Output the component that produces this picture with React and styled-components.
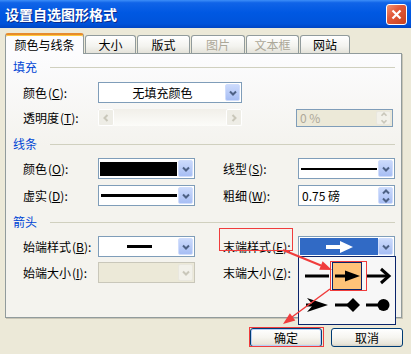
import React from "react";
import styled, { createGlobalStyle, css } from "styled-components";

const GlobalStyle = createGlobalStyle`
  html, body { margin: 0; padding: 0; }
  body {
    background: #ece9d8;
    font-family: "Noto Sans CJK SC", "Liberation Sans", sans-serif;
    font-size: 12px;
    color: #000;
  }
  u { text-decoration-thickness: 1px; text-underline-offset: 1px; }
`;

const Window = styled.div`
  position: relative;
  width: 411px;
  height: 354px;
  overflow: hidden;
  background: #ece9d8;
  display: flex;
  flex-direction: column;
`;

const TitleBar = styled.div`
  flex: none;
  height: 28px;
  display: flex;
  align-items: center;
  justify-content: space-between;
  padding: 0 4px 0 5px;
  background: linear-gradient(to bottom, #3d8ef8 0%, #1064e8 10%, #0058e2 45%, #0053da 85%, #0045c3 100%);
`;

const Title = styled.span`
  color: #fff;
  font-size: 14px;
  font-weight: bold;
  text-shadow: 1px 1px 0 #0c2b8c;
`;

const CloseButton = styled.div`
  width: 21px;
  height: 21px;
  box-sizing: border-box;
  border: 1px solid #fff;
  border-radius: 3px;
  background: linear-gradient(135deg, #f29474 0%, #e2593a 40%, #c8421e 100%);
  display: flex;
  align-items: center;
  justify-content: center;
`;

const Body = styled.div`
  flex: 1;
  display: flex;
  flex-direction: column;
  padding: 5px 9px 0 5px;
`;

const TabStrip = styled.div`
  display: flex;
  align-items: flex-end;
  height: 21px;
  position: relative;
  z-index: 1;
  margin-bottom: -1px;
`;

const Tab = styled.div`
  box-sizing: border-box;
  width: ${(p) => p.$w}px;
  height: 18px;
  margin-left: 1px;
  margin-bottom: 1px;
  border: 1px solid #919b9c;
  border-bottom: none;
  border-radius: 3px 3px 0 0;
  display: flex;
  align-items: center;
  justify-content: center;
  font-size: 12px;
  color: ${(p) => (p.$disabled ? "#aca899" : "#000")};
  background: linear-gradient(to bottom, #fff 0%, #f3f3ef 60%, #e4e2da 100%);
  ${(p) =>
    p.$active &&
    css`
      height: 21px;
      margin: 0;
      background: #fcfcfe;
      border-top: 2px solid #e68b2c;
      box-shadow: inset 0 1px 0 #ffc83c;
    `}
`;

const Panel = styled.div`
  box-sizing: border-box;
  height: 265px;
  border: 1px solid #919b9c;
  box-shadow: 1px 1px 0 #c8c5b6;
  background: linear-gradient(to bottom, #fcfcfe 0%, #f4f3ee 35%, #f4f3ee 100%);
  padding: 6px 6px 0 7px;
`;

const SectionHeader = styled.div`
  display: flex;
  align-items: center;
  gap: 13px;
  height: 14px;
  line-height: 14px;
  margin-top: ${(p) => (p.$first ? 0 : 9)}px;
  color: #0046d5;
  font-size: 12px;
  &::after {
    content: "";
    flex: 1;
    height: 1px;
    background: #d0d0bf;
  }
`;

const FieldGrid = styled.div`
  display: grid;
  grid-template-columns: ${(p) => p.$cols};
  grid-auto-rows: 21px;
  row-gap: ${(p) => p.$gap}px;
  align-items: center;
  margin: ${(p) => p.$top}px 0 0 10px;
`;

const LabelText = styled.span`
  font-size: 12px;
  white-space: nowrap;
  line-height: 21px;
`;

const Mnemonic = styled.span`
  margin-left: 1px;
`;

const SelectBox = styled.div`
  position: relative;
  box-sizing: border-box;
  height: 21px;
  display: flex;
  padding: 1px;
  border: 1px solid ${(p) => (p.$disabled ? "#c9c7ba" : "#7f9db9")};
  background: ${(p) => (p.$disabled ? "#ece9d8" : "#fff")};
`;

const SelectValue = styled.div`
  flex: 1;
  display: flex;
  align-items: center;
  justify-content: center;
  background: ${(p) => (p.$selected ? "#316ac5" : "transparent")};
  font-size: 12px;
`;

const DropButton = styled.div`
  width: 15px;
  flex: none;
  box-sizing: border-box;
  border: 1px solid ${(p) => (p.$disabled ? "#e9e7de" : "#d0ddfc")};
  border-radius: 2px;
  background: ${(p) =>
    p.$disabled ? "#f2f1ea" : "linear-gradient(to bottom, #cbdafc 0%, #b6c9f7 60%, #a7bef4 100%)"};
  display: flex;
  flex-direction: column;
  align-items: center;
  justify-content: center;
  gap: 2px;
`;

const Swatch = styled.div`
  flex: 1;
  align-self: stretch;
  margin: 2px 1px 1px 0;
  background: #000;
`;

const Stroke = styled.div`
  width: ${(p) => p.$w};
  height: ${(p) => p.$t}px;
  margin: 0 1px;
  background: #000;
`;

const ScrollBar = styled.div`
  box-sizing: border-box;
  height: 17px;
  display: flex;
  justify-content: space-between;
  background: linear-gradient(to bottom, #f1efe9, #fcfcf9);
`;

const ScrollButton = styled.div`
  width: 16px;
  box-sizing: border-box;
  border: 1px solid #fff;
  border-radius: 2px;
  background: #eeede6;
  display: flex;
  align-items: center;
  justify-content: center;
`;

const SpinBox = styled.div`
  grid-column: ${(p) => p.$col || "auto"};
  box-sizing: border-box;
  height: ${(p) => p.$h}px;
  display: flex;
  padding: 1px;
  border: 1px solid #7f9db9;
  background: ${(p) => (p.$disabled ? "#ece9d8" : "#fff")};
  color: ${(p) => (p.$disabled ? "#aca899" : "#000")};
`;

const SpinText = styled.div`
  flex: 1;
  display: flex;
  align-items: center;
  padding-left: 2px;
  font-size: 12px;
  white-space: pre;
`;

const ButtonRow = styled.div`
  display: flex;
  justify-content: flex-end;
  gap: 9px;
  margin: 10px -1px 0 0;
`;

const PushButton = styled.div`
  box-sizing: border-box;
  width: 72px;
  height: 19px;
  border: 1px solid #003c74;
  border-radius: 3px;
  background: linear-gradient(to bottom, #fff 0%, #f6f5f0 50%, #e8e5d9 88%, #d6d0c5 100%);
  display: flex;
  align-items: center;
  justify-content: center;
  font-size: 12px;
  ${(p) =>
    p.$default &&
    css`
      box-shadow: inset 0 0 0 1px #b7cdf7;
    `}
`;

const Popup = styled.div`
  position: absolute;
  top: 19px;
  left: -1px;
  width: 98px;
  height: 69px;
  box-sizing: border-box;
  border: 1px solid #0a246a;
  background: #f7f7f7;
  display: grid;
  grid-template-columns: repeat(3, 30px);
  grid-template-rows: 28px 28px;
  column-gap: 2px;
  row-gap: 1px;
  padding: 5px 1px;
  z-index: 5;
`;

const Cell = styled.div`
  box-sizing: border-box;
  border: 1px solid ${(p) => (p.$selected ? "#0a246a" : "transparent")};
  background: ${(p) => (p.$selected ? "#ffc378" : "transparent")};
  display: flex;
`;

const Overlay = styled.svg`
  position: absolute;
  left: 0;
  top: 0;
  pointer-events: none;
  z-index: 10;
`;

const Chevron = ({ dir = "down", color = "#4d6185" }) => {
  const d = {
    down: "M1 1.5 L4 4.5 L7 1.5",
    up: "M1 4.5 L4 1.5 L7 4.5",
    left: "M4.5 1 L1.5 4 L4.5 7",
    right: "M1.5 1 L4.5 4 L1.5 7",
  }[dir];
  const vertical = dir === "down" || dir === "up";
  return (
    <svg width={vertical ? 8 : 6} height={vertical ? 6 : 8} viewBox={vertical ? "0 0 8 6" : "0 0 6 8"}>
      <path d={d} fill="none" stroke={color} strokeWidth="2" />
    </svg>
  );
};

const Label = ({ text, k }) => (
  <LabelText>
    {text}
    <Mnemonic>
      (<u>{k}</u>):
    </Mnemonic>
  </LabelText>
);

const Select = ({ children, disabled, selected, popup }) => (
  <SelectBox $disabled={disabled}>
    <SelectValue $selected={selected}>{children}</SelectValue>
    <DropButton $disabled={disabled}>
      <Chevron color={disabled ? "#c9c7ba" : "#4d6185"} />
    </DropButton>
    {popup}
  </SelectBox>
);

const Spin = ({ value, disabled, h, col }) => (
  <SpinBox $disabled={disabled} $h={h} $col={col}>
    <SpinText>{value}</SpinText>
    <DropButton $disabled={disabled}>
      <Chevron dir="up" color={disabled ? "#c9c7ba" : "#4d6185"} />
      <Chevron dir="down" color={disabled ? "#c9c7ba" : "#4d6185"} />
    </DropButton>
  </SpinBox>
);

const arrowHeads = [
  [<path key="a" d="M5 14 H29" stroke="#000" strokeWidth="3" />],
  [
    <path key="a" d="M3 14 H16" stroke="#000" strokeWidth="3" />,
    <polygon key="b" points="13,8.5 28,14 13,19.5" fill="#000" />,
  ],
  [
    <path key="a" d="M2 14 H24" stroke="#000" strokeWidth="3" />,
    <polyline key="b" points="17,7 25,14 17,21" fill="none" stroke="#000" strokeWidth="3" />,
  ],
  [
    <path key="a" d="M6 14 H20" stroke="#000" strokeWidth="3" />,
    <polygon key="b" points="7,7 28,14 7,21 13,14" fill="#000" />,
  ],
  [
    <path key="a" d="M3 14 H16" stroke="#000" strokeWidth="3" />,
    <polygon key="b" points="14,14 21,7 28,14 21,21" fill="#000" />,
  ],
  [
    <path key="a" d="M2 14 H14" stroke="#000" strokeWidth="3" />,
    <circle key="b" cx="19.5" cy="14" r="6" fill="#000" />,
  ],
];

const ArrowPopup = () => (
  <Popup>
    {arrowHeads.map((shape, i) => (
      <Cell key={i} $selected={i === 1}>
        <svg width="28" height="26" viewBox="1 1 28 26">
          {shape}
        </svg>
      </Cell>
    ))}
  </Popup>
);

const tabs = [
  { name: "颜色与线条", w: 79, active: true },
  { name: "大小", w: 51 },
  { name: "版式", w: 53 },
  { name: "图片", w: 54, disabled: true },
  { name: "文本框", w: 53, disabled: true },
  { name: "网站", w: 50 },
];

export default function App() {
  return (
    <Window>
      <GlobalStyle />
      <TitleBar>
        <Title>设置自选图形格式</Title>
        <CloseButton>
          <svg width="11" height="11" viewBox="0 0 11 11">
            <path d="M1.5 1.5 L9.5 9.5 M9.5 1.5 L1.5 9.5" stroke="#fff" strokeWidth="2.2" />
          </svg>
        </CloseButton>
      </TitleBar>
      <Body>
        <TabStrip>
          {tabs.map((t) => (
            <Tab key={t.name} $w={t.w} $active={t.active} $disabled={t.disabled}>
              {t.name}
            </Tab>
          ))}
        </TabStrip>
        <Panel>
          <SectionHeader $first>填充</SectionHeader>
          <FieldGrid $cols="75px 144px 54px 97px" $gap={4} $top={8}>
            <Label text="颜色" k="C" />
            <Select>无填充颜色</Select>
            <span />
            <span />
            <Label text="透明度" k="T" />
            <ScrollBar>
              <ScrollButton>
                <Chevron dir="left" color="#c9c7ba" />
              </ScrollButton>
              <ScrollButton>
                <Chevron dir="right" color="#c9c7ba" />
              </ScrollButton>
            </ScrollBar>
            <Spin value="0 %" disabled h={18} col={4} />
          </FieldGrid>

          <SectionHeader>线条</SectionHeader>
          <FieldGrid $cols="75px 97px 28px 75px 97px" $gap={6} $top={7}>
            <Label text="颜色" k="O" />
            <Select>
              <Swatch />
            </Select>
            <span />
            <Label text="线型" k="S" />
            <Select>
              <Stroke $w="100%" $t={2} />
            </Select>
            <Label text="虚实" k="D" />
            <Select>
              <Stroke $w="100%" $t={3} />
            </Select>
            <span />
            <Label text="粗细" k="W" />
            <Spin value="0.75 磅" h={21} />
          </FieldGrid>

          <SectionHeader>箭头</SectionHeader>
          <FieldGrid $cols="75px 97px 28px 75px 97px" $gap={5} $top={7}>
            <Label text="始端样式" k="B" />
            <Select>
              <Stroke $w="25px" $t={3} />
            </Select>
            <span />
            <Label text="末端样式" k="E" />
            <Select selected popup={<ArrowPopup />}>
              <svg width="27" height="14" viewBox="0 0 27 14">
                <path d="M0 7 H16" stroke="#fff" strokeWidth="4" />
                <polygon points="14,1 27,7 14,13" fill="#fff" />
              </svg>
            </Select>
            <Label text="始端大小" k="I" />
            <Select disabled />
            <span />
            <Label text="末端大小" k="Z" />
            <span />
          </FieldGrid>
        </Panel>
        <ButtonRow>
          <PushButton $default>确定</PushButton>
          <PushButton>取消</PushButton>
        </ButtonRow>
      </Body>

      <Overlay width="411" height="354" viewBox="0 0 411 354">
        <g fill="none" stroke="#f03c3c" strokeWidth="1">
          <rect x="219.5" y="228.5" width="73" height="22" />
          <rect x="330.5" y="261.5" width="36" height="29" />
          <rect x="249.5" y="327.5" width="74" height="19" />
        </g>
        <g stroke="#f03c3c" fill="#f03c3c">
          <line x1="283" y1="250" x2="321" y2="265.5" strokeWidth="2" />
          <polygon points="332,270 319.2,269.7 322.6,261.3" stroke="none" />
          <line x1="330" y1="289" x2="292" y2="317" strokeWidth="1.5" />
          <polygon points="283,324 289.9,313.2 295.3,320.4" stroke="none" />
        </g>
      </Overlay>
    </Window>
  );
}
